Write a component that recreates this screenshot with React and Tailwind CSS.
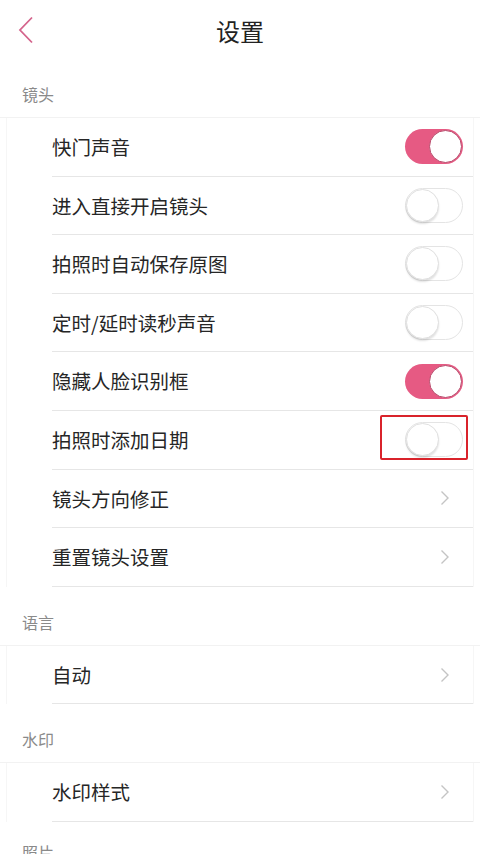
import React from "react";

const font = { fontFamily: '"Noto Sans CJK SC", "Noto Sans", sans-serif' };

function Toggle({ on }) {
  if (on) {
    return (
      <div className="w-[58px] h-[35px] rounded-full bg-[#e65a83] flex items-center justify-end pr-[1px]">
        <div className="w-[33px] h-[33px] rounded-full bg-white border border-[#b84c6c]" />
      </div>
    );
  }
  return (
    <div className="w-[58px] h-[35px] rounded-full bg-white border border-[#e4e4e4] flex items-center">
      <div className="w-[33px] h-[33px] rounded-full bg-white border border-[#e0e0e0] shadow-[0_2px_2px_rgba(0,0,0,0.12)]" />
    </div>
  );
}

function Chevron() {
  return (
    <svg width="10" height="16" viewBox="0 0 10 16" className="mr-[23px]">
      <path d="M1.5 1.5 L8 8 L1.5 14.5" fill="none" stroke="#c4c4c4" strokeWidth="1.4" />
    </svg>
  );
}

function Row({ label, right, highlight }) {
  return (
    <div className="h-[58.6px] flex items-center pl-[51px] relative">
      <div className="flex-1 h-full flex items-center border-b border-[#e6e6e6]">
        <span className="flex-1 text-[19.5px] text-[#262626] leading-none">{label}</span>
        {right === "chev" ? <Chevron /> : <div className="mr-[10px]"><Toggle on={right === "on"} /></div>}
      </div>
      {highlight && (
        <div className="absolute left-[379px] top-[4px] w-[88px] h-[45px] border-2 border-[#d9232b] rounded-[2px]" />
      )}
    </div>
  );
}

function Section({ title }) {
  return (
    <div className="h-[59px] flex items-center pl-[22px] pt-[11px]">
      <span className="text-[16px] text-[#8a8a8a] leading-none">{title}</span>
    </div>
  );
}

function Card({ children }) {
  return (
    <div className="border-t border-[#f2f2f2] -mt-[1px]">
      <div className="mx-[6px] border-x border-[#f6f6f6]">
        <div className="-ml-[6px]">{children}</div>
      </div>
    </div>
  );
}

export default function App() {
  return (
    <div className="w-[480px] h-[854px] overflow-hidden bg-white" style={font}>
      <div className="h-[59px] relative flex items-center justify-center">
        <svg width="16" height="28" viewBox="0 0 16 28" className="absolute left-[18px] top-[16px]">
          <path d="M14 1.5 L2 14 L14 26.5" fill="none" stroke="#d4648c" strokeWidth="1.8" />
        </svg>
        <span className="text-[24px] text-[#222] leading-none mt-[2px]">设置</span>
      </div>
      <Section title="镜头" />
      <Card>
        <Row label="快门声音" right="on" />
        <Row label="进入直接开启镜头" right="off" />
        <Row label="拍照时自动保存原图" right="off" />
        <Row label="定时/延时读秒声音" right="off" />
        <Row label="隐藏人脸识别框" right="on" />
        <Row label="拍照时添加日期" right="off" highlight />
        <Row label="镜头方向修正" right="chev" />
        <Row label="重置镜头设置" right="chev" />
      </Card>
      <Section title="语言" />
      <Card>
        <Row label="自动" right="chev" />
      </Card>
      <Section title="水印" />
      <Card>
        <Row label="水印样式" right="chev" />
      </Card>
      <div className="h-[59px] flex items-start pl-[22px] pt-[22px]">
        <span className="text-[16px] text-[#8a8a8a] leading-none">照片</span>
      </div>
    </div>
  );
}
